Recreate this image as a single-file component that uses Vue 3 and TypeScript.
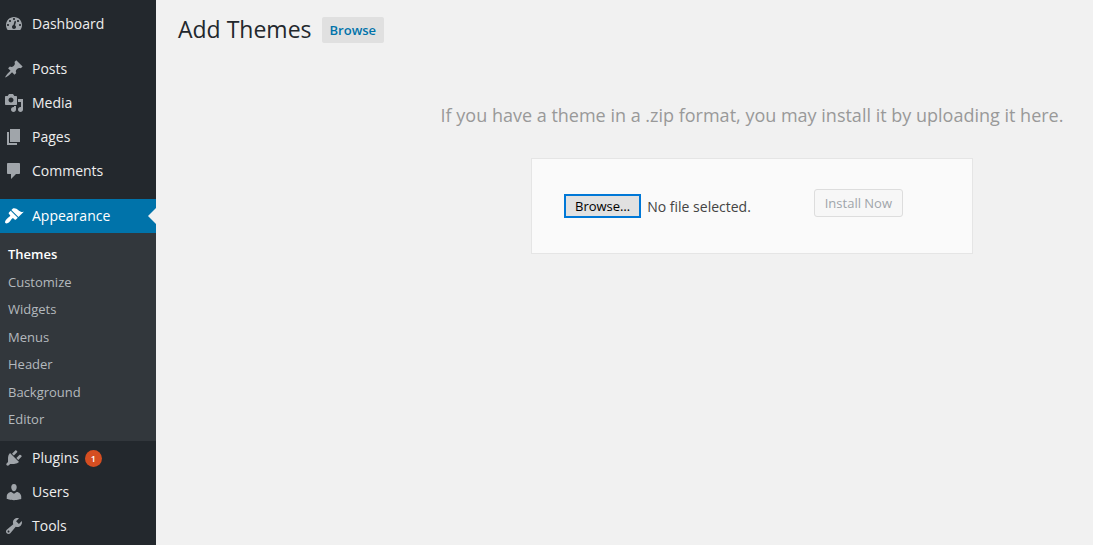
<script setup lang="ts">
import { ref } from 'vue'

interface MenuItem {
  label: string
  icon: string
  current?: boolean
  spaced?: boolean
  count?: number
  children?: string[]
}

const menu: MenuItem[] = [
  {
    label: 'Dashboard',
    icon: 'M3.76 16h12.48c1.1-1.37 1.76-3.11 1.76-5 0-4.42-3.58-8-8-8s-8 3.58-8 8c0 1.89.66 3.63 1.76 5zM10 4c.55 0 1 .45 1 1s-.45 1-1 1-1-.45-1-1 .45-1 1-1zM6 6c.55 0 1 .45 1 1s-.45 1-1 1-1-.45-1-1 .45-1 1-1zm8 0c.55 0 1 .45 1 1s-.45 1-1 1-1-.45-1-1 .45-1 1-1zm-2.63 .88c.49.2.73.77.53 1.26l-.9 3.13c.61.39 1 1 1 1.73 0 1.1-.9 2-2 2s-2-.9-2-2c0-.93.63-1.7 1.48-1.93l.98-3.67c.2-.46.42-.66.91-.52zM4 10c.55 0 1 .45 1 1s-.45 1-1 1-1-.45-1-1 .45-1 1-1zm12 0c.55 0 1 .45 1 1s-.45 1-1 1-1-.45-1-1 .45-1 1-1z',
  },
  {
    label: 'Posts',
    spaced: true,
    icon: 'M10.44 3.02l1.82-1.82 6.36 6.35-1.83 1.82c-1.05-.68-2.48-.57-3.41.36l-.75.75c-.92.93-1.04 2.35-.35 3.41l-1.83 1.82-2.41-2.41-2.8 2.79c-.42.42-3.38 2.71-3.8 2.29s1.86-3.39 2.28-3.81l2.79-2.79L4.1 9.36l1.83-1.82c1.05.69 2.48.57 3.4-.36l.75-.75c.93-.92 1.05-2.35.36-3.41z',
  },
  {
    label: 'Media',
    icon: 'M13 11V4c0-.55-.45-1-1-1h-1.67L9 1H5L3.67 3H2c-.55 0-1 .45-1 1v7c0 .55.45 1 1 1h10c.55 0 1-.45 1-1zM7 4.5c1.38 0 2.5 1.12 2.5 2.5S8.38 9.5 7 9.5 4.5 8.38 4.5 7 5.62 4.5 7 4.5zM14 6h5v10.5c0 1.38-1.12 2.5-2.5 2.5S14 17.88 14 16.5s1.12-2.5 2.5-2.5c.17 0 .34.02.5.05V9h-3V6zm-4 8.05V13h2v3.5c0 1.38-1.12 2.5-2.5 2.5S7 17.88 7 16.5 8.12 14 9.5 14c.17 0 .34.02.5.05z',
  },
  { label: 'Pages', icon: 'M6 15V2h10v13H6zm-1 1h8v2H3V5h2v11z' },
  {
    label: 'Comments',
    icon: 'M4 2h11c.55 0 1 .45 1 1v9c0 .55-.45 1-1 1h-3l-5 5v-5H4c-.55 0-1-.45-1-1V3c0-.55.45-1 1-1z',
  },
  {
    label: 'Appearance',
    spaced: true,
    current: true,
    icon: 'M14.48 11.06L7.41 3.99l1.5-1.5c.5-.56 2.3-.47 3.51.32 1.21.8 1.43 1.28 2.91 2.1 1.18.64 2.45 1.26 4.45.85zm-.71.71L6.7 4.7 4.93 6.47c-.39.39-.39 1.02 0 1.41l1.06 1.06c.39.39.39 1.03 0 1.42-.6.6-1.43 1.11-2.21 1.69-.35.26-.7.53-1.01.84C1.43 14.23.4 16.08 1.4 17.07c.99 1 2.84-.03 4.18-1.36.31-.31.58-.66.85-1.02.57-.78 1.08-1.61 1.69-2.21.39-.39 1.02-.39 1.41 0l1.06 1.06c.39.39 1.02.39 1.41 0z',
    children: ['Themes', 'Customize', 'Widgets', 'Menus', 'Header', 'Background', 'Editor'],
  },
  {
    label: 'Plugins',
    count: 1,
    icon: 'M13.11 4.36L9.87 7.6 8 5.73l3.24-3.24c.35-.34 1.05-.2 1.56.32.52.51.66 1.21.31 1.55zm-8 1.77l.91-1.12 9.01 9.01-1.19.84c-.71.71-2.63 1.16-3.82 1.16H6.14L4.9 17.26c-.59.59-1.54.59-2.12 0-.59-.58-.59-1.53 0-2.12l1.24-1.24v-3.88c0-1.13.4-3.19 1.09-3.89zm7.26 3.97l3.24-3.24c.34-.35 1.04-.21 1.55.31.52.51.66 1.21.31 1.55l-3.24 3.25z',
  },
  {
    label: 'Users',
    icon: 'M10 9.25c-2.27 0-2.73-3.44-2.73-3.44C7 4.02 7.82 2 9.97 2c2.16 0 2.98 2.02 2.71 3.81 0 0-.41 3.44-2.68 3.44zm0 2.57L12.72 10c2.39 0 4.52 2.33 4.52 4.53v2.49s-3.65 1.13-7.24 1.13c-3.65 0-7.24-1.13-7.24-1.13v-2.49c0-2.25 1.94-4.48 4.47-4.48z',
  },
  {
    label: 'Tools',
    icon: 'M16.68 9.77c-1.34 1.34-3.3 1.67-4.95.99l-5.41 6.52c-.99.99-2.59.99-3.58 0s-.99-2.59 0-3.57l6.52-5.42c-.68-1.65-.35-3.61.99-4.95 1.28-1.28 3.12-1.62 4.72-1.06l-2.89 2.89 2.82 2.82 2.86-2.87c.53 1.58.18 3.39-1.08 4.65zM3.81 16.21c.4.39 1.04.39 1.43 0 .4-.4.4-1.04 0-1.43-.39-.4-1.03-.4-1.43 0-.39.39-.39 1.03 0 1.43z',
  },
]

const picker = ref<HTMLInputElement | null>(null)
const fileName = ref('')

function onPick(event: Event): void {
  fileName.value = (event.target as HTMLInputElement).files?.[0]?.name ?? ''
}
</script>

<template>
  <div class="admin">
    <nav class="sidebar" aria-label="Main menu">
      <ul class="menu">
        <li v-for="item in menu" :key="item.label" :class="{ spaced: item.spaced }">
          <a href="#" class="menu-link" :class="{ current: item.current }">
            <svg class="icon" viewBox="0 0 20 20" aria-hidden="true">
              <path :d="item.icon" fill-rule="evenodd" />
            </svg>
            <span class="label">{{ item.label }}</span>
            <span v-if="item.count" class="count">{{ item.count }}</span>
          </a>
          <ul v-if="item.children" class="submenu">
            <li v-for="(child, i) in item.children" :key="child">
              <a href="#" class="sub-link" :class="{ active: i === 0 }">{{ child }}</a>
            </li>
          </ul>
        </li>
      </ul>
    </nav>

    <main class="content">
      <header class="title-row">
        <h1>Add Themes</h1>
        <a href="#" class="title-action">Browse</a>
      </header>

      <section class="upload">
        <p class="help">If you have a theme in a .zip format, you may install it by uploading it here.</p>
        <form class="upload-form" @submit.prevent>
          <div class="file-field">
            <input ref="picker" type="file" accept=".zip" aria-label="Theme zip file" hidden @change="onPick" />
            <button type="button" class="browse" @click="picker?.click()">Browse…</button>
            <span class="file-name">{{ fileName || 'No file selected.' }}</span>
          </div>
          <button type="submit" class="install" :disabled="!fileName">Install Now</button>
        </form>
      </section>
    </main>
  </div>
</template>

<style>
body {
  margin: 0;
  background: #f1f1f1;
}
</style>

<style scoped>
.admin {
  display: flex;
  height: 100vh;
  overflow: hidden;
  font-family: 'Open Sans', sans-serif;
  font-size: 14px;
  color: #444;
}

.sidebar {
  flex: 0 0 156px;
  background: #23282d;
}

.menu,
.submenu {
  margin: 0;
  padding: 0;
  list-style: none;
}

.menu {
  padding-top: 7px;
}

.spaced {
  margin-top: 11px;
}

.menu-link {
  position: relative;
  display: flex;
  align-items: center;
  height: 34px;
  padding-left: 4px;
  color: #eee;
  text-decoration: none;
}

.icon {
  width: 20px;
  height: 20px;
  margin-right: 8px;
  fill: #a0a5aa;
}

.label {
  line-height: 20px;
}

.current {
  background: #0073aa;
  color: #fff;
}

.current .icon {
  fill: #fff;
}

.current::after {
  content: '';
  position: absolute;
  top: 9px;
  right: 0;
  border: 8px solid transparent;
  border-left-width: 0;
  border-right-color: #f1f1f1;
}

.count {
  width: 17px;
  margin-left: 6px;
  border-radius: 9px;
  background: #d54e21;
  color: #fff;
  font-size: 9px;
  font-weight: 600;
  line-height: 17px;
  text-align: center;
}

.submenu {
  display: grid;
  grid-auto-rows: 1fr;
  box-sizing: border-box;
  min-height: 208px;
  padding: 8px 0 7px;
  background: #32373c;
}

.sub-link {
  display: block;
  padding: 0 8px;
  color: #b4b9be;
  font-size: 13px;
  line-height: 27px;
  text-decoration: none;
}

.active {
  color: #fff;
  font-weight: 600;
}

.content {
  flex: 1;
  min-width: 0;
}

.title-row {
  display: flex;
  align-items: center;
  gap: 10px;
  padding: 14px 22px 0;
}

h1 {
  margin: 0;
  padding-bottom: 2px;
  color: #23282d;
  font-size: 23px;
  font-weight: 400;
  line-height: 30px;
}

.title-action {
  padding: 0 8px;
  border-radius: 2px;
  background: #e0e0e0;
  color: #0073aa;
  font-size: 13px;
  font-weight: 600;
  line-height: 26px;
  text-decoration: none;
}

.upload {
  display: flex;
  flex-direction: column;
  align-items: center;
  padding: 56px 0 0 255px;
}

.help {
  margin: 0;
  color: #999;
  font-size: 18px;
  line-height: 26px;
}

.upload-form {
  display: flex;
  align-items: flex-start;
  justify-content: space-between;
  box-sizing: border-box;
  width: 100%;
  max-width: 442px;
  margin-top: 30px;
  padding: 30px 69px 35px 32px;
  border: 1px solid #e5e5e5;
  background: #fafafa;
}

.file-field {
  display: flex;
  align-items: center;
  gap: 6px;
  padding-top: 5px;
}

.browse {
  height: 24px;
  padding: 0 9px;
  border: 2px solid #0078d7;
  background: #e1e1e1;
  color: #000;
  font-family: inherit;
  font-size: 13px;
  line-height: 20px;
}

.install {
  height: 28px;
  padding: 0 10px;
  border: 1px solid #ddd;
  border-radius: 3px;
  background: #f7f7f7;
  color: #a0a5aa;
  font-family: inherit;
  font-size: 13px;
  line-height: 26px;
}
</style>
